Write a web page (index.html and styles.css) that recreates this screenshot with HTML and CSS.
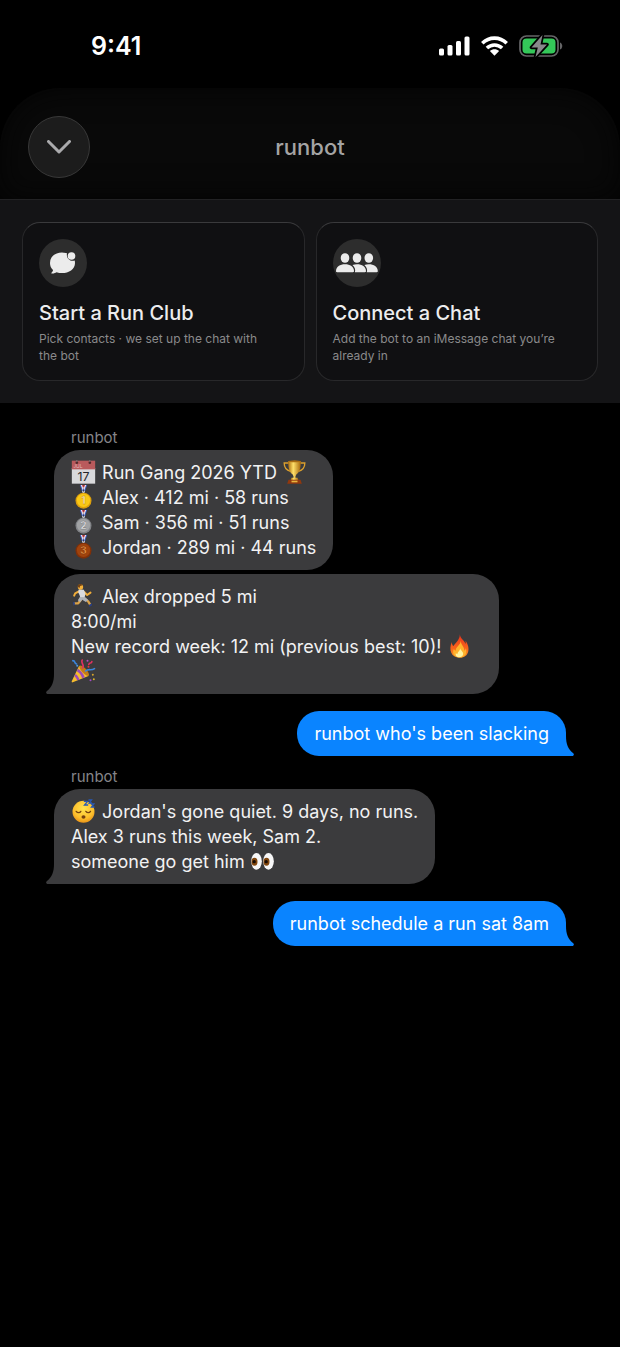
FILE: index.html
```
<!DOCTYPE html>
<html lang="en">
  <head>
    <meta charset="UTF-8" />
    <meta name="viewport" content="width=device-width, initial-scale=1.0" />
    <title>runbot</title>
    <link rel="stylesheet" href="styles.css">
  </head>
  <body>
    <svg class="sprite" width="0" height="0" aria-hidden="true">
      <defs>
        <linearGradient id="gold" x1="0" y1="0" x2="1" y2="0">
          <stop offset="0" stop-color="#a86a0c" />
          <stop offset="0.4" stop-color="#ffe06a" />
          <stop offset="1" stop-color="#a5660b" />
        </linearGradient>
        <linearGradient id="flame" x1="0" y1="0" x2="0" y2="1">
          <stop offset="0" stop-color="#e8301c" />
          <stop offset="0.6" stop-color="#f8641c" />
          <stop offset="1" stop-color="#fb9a24" />
        </linearGradient>
        <radialGradient id="face" cx="0.5" cy="0.35" r="0.7">
          <stop offset="0" stop-color="#ffe34f" />
          <stop offset="0.65" stop-color="#fdbf2c" />
          <stop offset="1" stop-color="#e58a14" />
        </radialGradient>
      </defs>
      <symbol id="ribbon" viewBox="0 0 72 72">
        <path fill="#3b5dc2" d="M25 0h6l9 23h-7zM47 0h-6l-9 23h7z" />
        <path fill="#f1f1f5" d="M28 0h5l7 21-3 4zM44 0h-5l-7 21 3 4z" />
        <path fill="#d5323e" d="M32 0h3l3 10-2 5zM40 0h-3l-3 10 2 5z" />
      </symbol>
      <symbol id="tail" viewBox="0 0 9 20">
        <path d="M8 0c0 8-2 13-7 17-1.500 1-1 3 1 3h7V0z" />
      </symbol>
    </svg>

    <div class="status-bar">
      <span class="time">9:41</span>
      <div class="status-icons">
        <svg width="31" height="20" viewBox="0 0 31 20" role="img" aria-label="Signal">
          <g fill="#fff">
            <rect x="0" y="12.500" width="5" height="7" rx="1.500" />
            <rect x="8.500" y="9" width="5" height="10.500" rx="1.500" />
            <rect x="17" y="5" width="5" height="14.500" rx="1.500" />
            <rect x="25.500" y="0.500" width="5" height="19" rx="1.500" />
          </g>
        </svg>
        <svg width="27" height="20" viewBox="0 0 27 20" role="img" aria-label="Wi-Fi">
          <path fill="none" stroke="#fff" stroke-width="3.600" d="M1.300 7.200C8.200.4 18.800.4 25.700 7.200M5.900 12C10.300 7.900 16.700 7.900 21.100 12" />
          <path fill="#fff" d="M8.900 15c2.600-2.400 6.600-2.400 9.200 0l-4.600 4.700z" />
        </svg>
        <svg width="44" height="22" viewBox="0 0 44 22" role="img" aria-label="Battery charging">
          <rect x="1" y="1" width="38" height="20" rx="6.500" fill="none" stroke="#656567" stroke-width="1.700" />
          <rect x="3.500" y="3.500" width="33" height="15" rx="4" fill="#34c759" />
          <path fill="#656567" d="M41 7.500c3 1 3 6 0 7z" />
          <path fill="#88888b" stroke="#000" stroke-width="3.500" stroke-linejoin="round" paint-order="stroke" d="M23.500 0L12.500 12.500h6.300L16.500 22 28 9.500h-6.500z" />
        </svg>
      </div>
    </div>

    <header class="header">
      <button class="close" type="button" aria-label="Close">
        <svg width="24" height="14" viewBox="0 0 24 14">
          <path fill="none" stroke="#aaaaac" stroke-width="3" stroke-linecap="round" stroke-linejoin="round" d="M1.500 1.500L12 12 22.500 1.500" />
        </svg>
      </button>
      <h1>runbot</h1>
    </header>

    <section class="actions">
      <button class="card" type="button">
        <span class="card-icon">
          <svg width="26" height="22" viewBox="0 0 26 22">
            <path fill="#ececec" d="M16 1C8-1 0 3 0 11c0 3 1 5 3 7 0 1-.7 2-1.500 2.700-.5.600 0 1 .8.900 2-.2 3.200-.8 4.200-1.400C15 23 25 19 25 11c0-1-.1-1.700-.3-2.500C20 10 16 6 17 1.200z" />
            <circle cx="21.500" cy="4" r="3.800" fill="#ececec" />
          </svg>
        </span>
        <span class="card-title">Start a Run Club</span>
        <span class="card-text">Pick contacts · we set up the chat with the bot</span>
      </button>
      <button class="card" type="button">
        <span class="card-icon">
          <svg width="42" height="20" viewBox="0 0 42 20">
            <g fill="#ececec">
              <ellipse cx="9" cy="5" rx="4.300" ry="4.800" />
              <ellipse cx="21" cy="5" rx="4.300" ry="4.800" />
              <ellipse cx="32.800" cy="5" rx="4.300" ry="4.800" />
              <path d="M0 18c0-4 4-6.700 9-6.700s9 2.700 9 6.700c0 .8-.4 1.200-1.200 1.200H1.200C.4 19.200 0 18.800 0 18z" />
              <path d="M16.500 12c1.400-.5 3-.7 4.500-.7 5 0 9 2.700 9 6.700 0 .8-.4 1.200-1.200 1.200h-9.900c.8-2.400 0-5-2.400-7.200z" />
              <path d="M28.400 12c1.400-.5 3-.7 4.400-.7 5 0 9 2.700 9 6.700 0 .8-.4 1.200-1.200 1.200h-9.800c.8-2.400 0-5-2.400-7.200z" />
            </g>
          </svg>
        </span>
        <span class="card-title">Connect a Chat</span>
        <span class="card-text">Add the bot to an iMessage chat you’re already in</span>
      </button>
    </section>

    <main class="chat">
      <div class="sender">runbot</div>
      <div class="bubble received">
        <svg class="emoji" viewBox="0 0 72 72" role="img" aria-label="Calendar">
          <path fill="#d9d9db" d="M1 24h70v47H1z" />
          <path fill="#b95a5c" d="M1 2h70v26H1z" />
          <circle cx="16" cy="8" r="4" fill="#54282a" />
          <circle cx="55" cy="8" r="4" fill="#54282a" />
          <path stroke="#77787b" stroke-width="3" d="M16 0v6M55 0v6" />
          <text class="calendar-month" x="5" y="25">JUL</text>
          <text class="calendar-day" x="36" y="64">17</text>
        </svg>
        Run Gang 2026 YTD
        <svg class="emoji" viewBox="0 0 72 72" role="img" aria-label="Trophy">
          <path fill="none" stroke="#dba02e" stroke-width="4" d="M19 9H5c0 15 8 22 19 25M53 9h14c0 15-8 22-19 25" />
          <path fill="url(#gold)" d="M17 3h38c0 22-4 35-13 40l-3 6v9h-6v-9l-3-6C21 38 17 25 17 3z" />
          <ellipse cx="36" cy="4" rx="19" ry="3" fill="#a96c13" />
          <path fill="url(#gold)" d="M27 53h18l3 8H24z" />
          <path fill="#92380e" d="M18 59h36l4 12H14z" />
          <path fill="#e9b63e" d="M27 62h18v5H27z" />
        </svg><br />
        <svg class="emoji" viewBox="0 0 72 72" role="img" aria-label="First">
          <use href="#ribbon" />
          <circle cx="36" cy="47" r="24" fill="#dc9f0d" />
          <circle cx="36" cy="46" r="20" fill="#fac816" />
          <text class="medal-number" x="36" y="57" fill="#fff6c9" stroke="#b87905">1</text>
        </svg>
        Alex · 412 mi · 58 runs<br />
        <svg class="emoji" viewBox="0 0 72 72" role="img" aria-label="Second">
          <use href="#ribbon" />
          <circle cx="36" cy="47" r="24" fill="#818387" />
          <circle cx="36" cy="46" r="20" fill="#a0a2a4" />
          <text class="medal-number" x="36" y="57" fill="#eeeeef" stroke="#6c6e71">2</text>
        </svg>
        Sam · 356 mi · 51 runs<br />
        <svg class="emoji" viewBox="0 0 72 72" role="img" aria-label="Third">
          <use href="#ribbon" />
          <circle cx="36" cy="47" r="24" fill="#813008" />
          <circle cx="36" cy="46" r="20" fill="#a0430d" />
          <text class="medal-number" x="36" y="57" fill="#f09a49" stroke="#74300a">3</text>
        </svg>
        Jordan · 289 mi · 44 runs
      </div>
      <div class="bubble received last">
        <svg class="emoji" viewBox="0 0 72 72" role="img" aria-label="Runner">
          <path fill="none" stroke="#f0ad39" stroke-width="6" stroke-linecap="round" stroke-linejoin="round" d="M22 22l-11 6-3 7M38 24l9 9 10-7" />
          <path fill="none" stroke="#dba247" stroke-width="7" stroke-linecap="round" stroke-linejoin="round" d="M28 48L20 58H9M40 44l10 8 6 10" />
          <path fill="#d9dadd" d="M22 16l15 1 5 12-3 13-12 1-3-10-4-8z" />
          <path fill="#aeb2b8" d="M25 39l16 1 9 8-7 6-11-7-6 8-7-6z" />
          <circle cx="27" cy="9" r="8" fill="#f3b13b" />
          <path fill="#714215" d="M18 8c0-9 12-10 16-4l-8 2-2 6z" />
          <path fill="#273e83" d="M4 54l6 1v7l-4 3zM52 63l9-5 1 6-8 5z" />
        </svg>
        Alex dropped 5 mi<br />
        8:00/mi<br />
        New record week: 12 mi (previous best: 10)!
        <svg class="emoji" viewBox="0 0 72 72" role="img" aria-label="Fire">
          <path fill="url(#flame)" d="M37 1c1 13 13 17 17 29 1-4 1-7 0-10 16 21 11 51-17 51C10 71 3 46 13 24c0 7 2 10 5 12C26 25 37 17 37 1z" />
          <path fill="#ffb22c" d="M40 20c0 13 12 19 10 30 4-2 5-5 5-8 5 17-3 28-19 28-16 0-23-12-17-25 2 4 4 5 6 5-1-13 14-16 15-30z" />
          <path fill="#fff4a0" d="M38 43c2 8 10 10 9 18-1 6-6 9-12 9s-12-4-10-12l5 3c-1-7 8-10 8-18z" />
        </svg>
        <svg class="emoji" viewBox="0 0 72 72" role="img" aria-label="Party">
          <path fill="#f6bc2f" d="M23 20c12 5 24 17 28 31L4 70c-3 1-4-1-3-4z" />
          <path fill="#9d4bb7" d="M20 29c9 7 16 15 20 26l-8 3c-4-11-9-17-16-21zM12 45c6 4 10 10 12 17l-7 2c-2-6-5-9-8-12z" />
          <ellipse cx="38" cy="35" rx="7" ry="20" fill="#c37b17" transform="rotate(-43 38 35)" />
          <path fill="none" stroke="#3c86da" stroke-width="5" stroke-linecap="round" d="M42 36c9-8 17 0 27-7M4 5c9 0 3 8 11 10" />
          <path fill="none" stroke="#df3260" stroke-width="5" stroke-linecap="round" d="M33 27c8-8-6-14-1-24M52 16c2-8 8 0 9-8" />
          <circle cx="17" cy="20" r="3" fill="#4c9bdf" />
          <circle cx="48" cy="5" r="3" fill="#b64bc2" />
          <circle cx="51" cy="23" r="3" fill="#e3353b" />
          <circle cx="64" cy="47" r="3" fill="#d6a52c" />
          <circle cx="57" cy="64" r="3" fill="#a34bc2" />
          <circle cx="67" cy="61" r="3" fill="#d8b12e" />
        </svg>
        <svg class="tail" aria-hidden="true"><use href="#tail" /></svg>
      </div>
      <div class="bubble sent">
        runbot who's been slacking
        <svg class="tail" aria-hidden="true"><use href="#tail" /></svg>
      </div>
      <div class="sender">runbot</div>
      <div class="bubble received last">
        <svg class="emoji" viewBox="0 0 72 72" role="img" aria-label="Sleeping">
          <circle cx="36" cy="38" r="33" fill="url(#face)" />
          <path fill="none" stroke="#74410f" stroke-width="4" stroke-linecap="round" d="M14 37c4 5 11 5 14 0M43 37c4 5 11 5 14 0" />
          <ellipse cx="36" cy="54" rx="6" ry="5" fill="#74410f" />
          <path fill="none" stroke="#2959b4" stroke-width="4" d="M37 7h11L39 18h11M51 3h9l-7 9h9M58 15h9l-7 9h9" />
        </svg>
        Jordan's gone quiet. 9 days, no runs.<br />
        Alex 3 runs this week, Sam 2.<br />
        someone go get him
        <svg class="emoji" viewBox="0 0 72 72" role="img" aria-label="Eyes">
          <ellipse cx="18" cy="37" rx="16" ry="25" fill="#f7f7f8" />
          <ellipse cx="54" cy="37" rx="16" ry="25" fill="#f7f7f8" />
          <ellipse cx="12" cy="38" rx="9" ry="12" fill="#81460e" />
          <ellipse cx="48" cy="38" rx="9" ry="12" fill="#81460e" />
          <circle cx="11" cy="38" r="5" fill="#160b05" />
          <circle cx="47" cy="38" r="5" fill="#160b05" />
        </svg>
        <svg class="tail" aria-hidden="true"><use href="#tail" /></svg>
      </div>
      <div class="bubble sent">
        runbot schedule a run sat 8am
        <svg class="tail" aria-hidden="true"><use href="#tail" /></svg>
      </div>
    </main>
  </body>
</html>
```
FILE: styles.css
```
* {
  box-sizing: border-box;
}

body {
  margin: 0;
  min-height: 100vh;
  background-color: #000;
  color: #f2f2f3;
  font-family: Inter, sans-serif;
}

button {
  font-family: inherit;
  color: inherit;
  cursor: pointer;
}

.sprite {
  position: absolute;
}

.status-bar {
  display: flex;
  justify-content: space-between;
  align-items: center;
  padding: 30px 57px 26px 91px;
}

.time {
  font-size: 25px;
  font-weight: 600;
  line-height: 32px;
  color: #fff;
}

.status-icons {
  display: flex;
  align-items: center;
  gap: 11px;
}

.header {
  display: grid;
  grid-template-columns: 62px 1fr 62px;
  align-items: center;
  padding: 28px 28px 21px;
  border-radius: 60px 60px 0 0;
  background-color: #090909;
  box-shadow: inset 0 0 30px #040404;
}

.close {
  display: flex;
  justify-content: center;
  align-items: center;
  height: 62px;
  padding: 0;
  border: 1px solid #383838;
  border-radius: 50%;
  background-color: #1c1c1c;
}

h1 {
  margin: 0;
  font-size: 22px;
  font-weight: 500;
  line-height: 28px;
  text-align: center;
  color: #a4a4a4;
}

.actions {
  display: grid;
  grid-template-columns: 1fr 1fr;
  gap: 11px;
  padding: 22px;
  border-top: 1px solid #222224;
  background-color: #141416;
}

.card {
  display: flex;
  flex-direction: column;
  align-items: flex-start;
  padding: 16px;
  border: 1px solid #28282a;
  border-top-color: #3a3a3c;
  border-radius: 18px;
  background-color: #101012;
  text-align: left;
}

.card-icon {
  display: flex;
  justify-content: center;
  align-items: center;
  width: 48px;
  height: 48px;
  margin-bottom: 14px;
  border-radius: 50%;
  background-color: #2d2d2d;
}

.card-title {
  margin-bottom: 5px;
  font-size: 20px;
  font-weight: 500;
  line-height: 24px;
  color: #ededee;
}

.card-text {
  max-width: 235px;
  font-size: 12px;
  line-height: 17px;
  color: #8a8a8b;
}

.chat {
  display: flex;
  flex-direction: column;
  align-items: flex-start;
  padding: 25px 54px;
}

.sender {
  margin: 0 17px 2px;
  font-size: 15px;
  line-height: 20px;
  color: #858589;
}

.bubble {
  position: relative;
  max-width: 445px;
  padding: 10px 17px;
  border-radius: 26px;
  font-size: 18px;
  line-height: 25px;
}

.received {
  margin-bottom: 4px;
  background-color: #3b3b3d;
  fill: #3b3b3d;
}

.received.last {
  margin-bottom: 17px;
  border-bottom-left-radius: 0;
}

.sent {
  align-self: flex-end;
  margin-bottom: 11px;
  border-radius: 22px 22px 0 22px;
  background-color: #0a84ff;
  fill: #0a84ff;
  color: #fff;
}

.emoji {
  width: 25px;
  height: 24px;
  margin-right: 1px;
  vertical-align: top;
}

.tail {
  position: absolute;
  bottom: 0;
  left: -8px;
  width: 9px;
  height: 20px;
}

.sent .tail {
  right: -8px;
  left: auto;
  transform: scaleX(-1);
}

.calendar-month {
  font-size: 15px;
  fill: #e5b9ba;
}

.calendar-day {
  font-size: 37px;
  text-anchor: middle;
  fill: #252527;
}

.medal-number {
  font-size: 30px;
  font-weight: 700;
  text-anchor: middle;
}
```
